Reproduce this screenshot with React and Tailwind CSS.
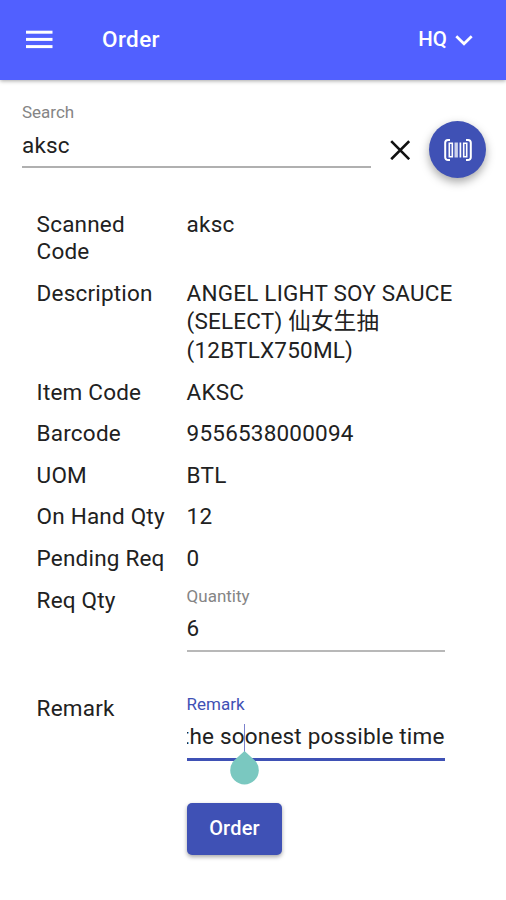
// ─── OrderPage ────────────────────────────────────────────────────────────────
const DETAILS = [
  { label: 'Scanned Code', value: 'aksc' },
  { label: 'Description',  value: 'ANGEL LIGHT SOY SAUCE (SELECT) 仙女生抽 (12BTLX750ML)', tall: true },
  { label: 'Item Code',    value: 'AKSC' },
  { label: 'Barcode',      value: '9556538000094' },
  { label: 'UOM',          value: 'BTL' },
  { label: 'On Hand Qty',  value: '12' },
  { label: 'Pending Req',  value: '0' },
];

function MenuIcon() {
  return (
    <svg width="28" height="20" viewBox="0 0 28 20" fill="#fff">
      <rect x="1" y="0.7" width="26.5" height="3" />
      <rect x="1" y="7.9" width="26.5" height="3" />
      <rect x="1" y="15.1" width="26.5" height="3" />
    </svg>
  );
}

function BarcodeIcon() {
  return (
    <svg width="28" height="24" viewBox="0 0 28 24" fill="none" stroke="#fff">
      <path strokeWidth="2" d="M6 2H4A2.8 2.8 0 0 0 1.2 4.8v14.4A2.8 2.8 0 0 0 4 22h2" />
      <path strokeWidth="2" d="M22 2h2a2.8 2.8 0 0 1 2.8 2.8v14.4A2.8 2.8 0 0 1 24 22h-2" />
      <path strokeWidth="1.6" d="M5.3 5.2h3v13.6h-3zM19.7 5.2h3v13.6h-3z" />
      <path strokeWidth="3.4" strokeOpacity="0.75" d="M12.2 4.5v15" />
      <path strokeWidth="1.7" d="M16.4 4.5v15" />
    </svg>
  );
}

export default function App() {
  return (
    <div className="h-[900px] w-[506px] overflow-hidden bg-white text-[22.5px] leading-[27px] tracking-[0.2px] text-[#212121] font-[Roboto,'Noto_Sans_CJK_SC',sans-serif]">

      {/* App bar */}
      <header className="flex h-20 items-center bg-[#5160ff] pb-px pl-[25px] pr-[33px] font-medium text-white shadow-[0_1px_4px_rgba(0,0,0,0.35)]">
        <button><MenuIcon /></button>
        <h1 className="ml-[49px] text-[22.5px] tracking-[0.4px]">Order</h1>
        <button className="ml-auto flex items-center gap-2 text-[20.5px] tracking-normal">
          HQ
          <svg width="18" height="12" viewBox="0 0 18 12" fill="none" stroke="#fff" strokeWidth="2.7">
            <path d="M1.3 2.3 9 9.8l7.7-7.5" />
          </svg>
        </button>
      </header>

      {/* Search */}
      <div className="flex pl-[22px] pr-5 pt-[22px]">
        <div className="h-[66px] w-[349px] border-b-2 border-[#b0b0b0]">
          <div className="text-[17px] leading-5 tracking-normal text-[#858585]">Search</div>
          <div className="mt-[10px]">aksc</div>
        </div>
        <button className="ml-[19px] mt-[38px] h-5 w-5">
          <svg width="20" height="20" viewBox="0 0 20 20" fill="none" stroke="#111" strokeWidth="2.6">
            <path d="m1.2 1.2 18 18M19.2 1.2l-18 18" />
          </svg>
        </button>
        <button className="ml-[19px] mt-[19px] flex h-[57px] w-[57px] items-center justify-center rounded-full bg-[#3f51b5] shadow-[0_4px_10px_rgba(0,0,0,0.35)]">
          <BarcodeIcon />
        </button>
      </div>

      {/* Item details */}
      <dl className="mt-[33px] pl-[36.6px]">
        {DETAILS.map((row) => (
          <div key={row.label} className="flex pb-[14.6px]">
            <dt className="w-[150px] shrink-0 pr-4">
              <span className={row.label === 'Scanned Code' ? '' : 'whitespace-nowrap'}>{row.label}</span>
            </dt>
            <dd className={row.tall ? 'w-[280px] leading-[28.5px] -mt-px' : 'w-[280px]'}>{row.value}</dd>
          </div>
        ))}

        <div className="flex h-[108px]">
          <dt className="w-[150px]">Req Qty</dt>
          <dd className="h-[65px] w-[258px] border-b-2 border-[#b8b8b8]">
            <div className="text-[17px] leading-[19px] tracking-normal text-[#858585]">Quantity</div>
            <div className="mt-[9px]">6</div>
          </dd>
        </div>

        <div className="flex">
          <dt className="w-[150px]">Remark</dt>
          <dd className="relative h-[66px] w-[258px] border-b-3 border-[#3f51b5]">
            <div className="text-[17px] leading-[19px] tracking-normal text-[#3f51b5]">Remark</div>
            <div className="mt-[9px] flex justify-end overflow-hidden whitespace-nowrap">the soonest possible time</div>
            {/* Caret and its drag handle */}
            <div className="absolute left-[57px] top-[29px] h-7 w-px bg-[#7a80cc]" />
            <svg className="absolute left-[43px] top-[56px]" width="29" height="34" viewBox="0 0 29 34" fill="#7ac8c0">
              <path d="M14.5 0 24.7 9.2A14.3 14.3 0 1 1 4.3 9.2Z" />
            </svg>
          </dd>
        </div>
      </dl>

      <button className="ml-[187px] mt-[42px] h-[52px] w-[95px] rounded-[5px] bg-[#3f51b5] text-[20px] font-medium tracking-[0.2px] text-white shadow-[0_2px_4px_rgba(0,0,0,0.35)]">
        Order
      </button>
    </div>
  );
}
